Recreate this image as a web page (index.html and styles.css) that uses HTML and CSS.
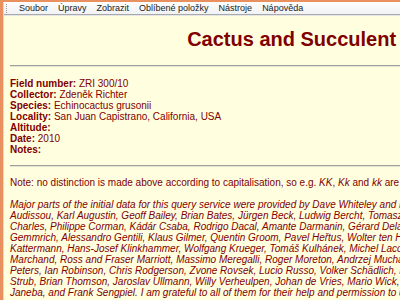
FILE: index.html
```html
<!DOCTYPE html>
<html lang="cs">
<head>
  <meta charset="UTF-8" />
  <title>Cactus and Succulent Field Number Query</title>
  <link rel="stylesheet" href="styles.css">
</head>
<body>

  <div class="window">
    <div class="menubar">
      <span class="grip"></span>
      <span class="menu-item">Soubor</span>
      <span class="menu-item">Úpravy</span>
      <span class="menu-item">Zobrazit</span>
      <span class="menu-item">Oblíbené položky</span>
      <span class="menu-item">Nástroje</span>
      <span class="menu-item">Nápověda</span>
    </div>

    <div class="page">
      <h1>Cactus and Succulent Field Number Query</h1>
      <hr>

      <div class="record">
        <div><b>Field number:</b> ZRI 300/10</div>
        <div><b>Collector:</b> Zdeněk Richter</div>
        <div><b>Species:</b> Echinocactus grusonii</div>
        <div><b>Locality:</b> San Juan Capistrano, California, USA</div>
        <div><b>Altitude:</b></div>
        <div><b>Date:</b> 2010</div>
        <div><b>Notes:</b></div>
      </div>

      <hr>

      <p>Note: no distinction is made above according to capitalisation, so e.g. <i>KK</i>, <i>Kk</i> and <i>kk</i> are all treated the same.</p>

      <p class="credits">
        Major parts of the initial data for this query service were provided by Dave Whiteley and Paul Klaassen, with further contributions from Lorenzo<br>
        Audissou, Karl Augustin, Geoff Bailey, Brian Bates, Jürgen Beck, Ludwig Bercht, Tomasz Blaszczyk, Leo van der Hoeven, Graham<br>
        Charles, Philippe Corman, Kádár Csaba, Rodrigo Dacal, Amante Darmanin, Gérard Delanoy, Jean-Marc Chalet, Hans<br>
        Gemmrich, Alessandro Gentili, Klaus Gilmer, Quentin Groom, Pavel Heřtus, Wolter ten Hoeve, Peter Hruby, Ulrich<br>
        Kattermann, Hans-Josef Klinkhammer, Wolfgang Krueger, Tomáš Kulhánek, Michel Lacoste, Alain Laroze, Jean-Louis<br>
        Marchand, Ross and Fraser Marriott, Massimo Meregalli, Roger Moreton, Andrzej Mucha, Andreas Nowak, Wolfgang<br>
        Peters, Ian Robinson, Chris Rodgerson, Zvone Rovsek, Lucio Russo, Volker Schädlich, Eric Schmitt, Hartmut<br>
        Strub, Brian Thomson, Jaroslav Ullmann, Willy Verheulpen, Johan de Vries, Mario Wick, Rudolf Schmied, Ladislav<br>
        Janeba, and Frank Sengpiel. I am grateful to all of them for their help and permission to use their data.
      </p>
    </div>
  </div>

</body>
</html>
```

FILE: styles.css
```css
* {
  box-sizing: border-box;
}

html, body {
  margin: 0;
  padding: 0;
  height: 100%;
  overflow: hidden;
}

body {
  background-color: #e8905f;
  font-family: "Liberation Sans", Arial, sans-serif;
}

.window {
  margin: 2px 0 0 3px;
  height: 100%;
  border-left: 1px solid #f4d2bd;
}

.menubar {
  display: flex;
  align-items: center;
  height: 13px;
  background: linear-gradient(#fdfdfd, #f1f2f4);
  border-bottom: 1px solid #a7a9ab;
  font-size: 9px;
  color: #1a1a1a;
  white-space: nowrap;
}

.grip {
  width: 1px;
  height: 9px;
  margin: 0 7px 0 2px;
  border-left: 1px dotted #9a9a9a;
}

.menu-item {
  padding: 0 5px;
}

.page {
  width: 772px;
  height: 100%;
  background-color: #ffffe0;
  border-top: 1px solid #e6e6e6;
  padding: 12px 6px 0 6px;
  color: #800000;
  font-size: 10px;
}

h1 {
  margin: 0 0 14px 0;
  text-align: center;
  font-size: 20px;
  font-weight: bold;
}

hr {
  margin: 0;
  border: none;
  border-top: 1px solid #a0a0a0;
  border-bottom: 1px solid #e4e4d0;
}

.record {
  margin: 11px 0 10px 0;
}

p {
  margin: 10px 0;
}

.credits {
  margin-top: 11px;
  font-style: italic;
  white-space: nowrap;
}
```
